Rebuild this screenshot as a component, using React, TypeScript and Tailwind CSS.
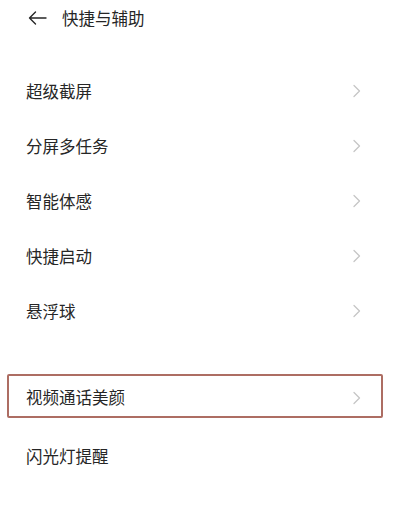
import React from 'react';

const groupOne = ['超级截屏', '分屏多任务', '智能体感', '快捷启动', '悬浮球'];

const Chevron = () => (
  <svg width="10" height="14" viewBox="0 0 10 14" fill="none" className="shrink-0">
    <path d="M2 1.5 L7.5 7 L2 12.5" stroke="#c6c6c6" strokeWidth="1.3" strokeLinecap="round" strokeLinejoin="round" />
  </svg>
);

const Row = ({ label, arrow = true }: { label: string; arrow?: boolean }) => (
  <div className="h-[55px] flex items-center justify-between pl-[26px] pr-[38px]">
    <span className="text-[16.5px] text-[#262626]">{label}</span>
    {arrow && <Chevron />}
  </div>
);

export default function App() {
  return (
    <div
      className="w-[400px] h-[506px] bg-white overflow-hidden"
      style={{ fontFamily: '"Noto Sans CJK SC", "Noto Sans", sans-serif' }}
    >
      {/* header */}
      <div className="h-[36px] flex items-center pl-[28px] gap-[15px]">
        <svg width="19" height="14" viewBox="0 0 19 14" fill="none">
          <path d="M18 7 H1.5 M7.5 1 L1.5 7 L7.5 13" stroke="#262626" strokeWidth="1.4" strokeLinecap="round" strokeLinejoin="round" />
        </svg>
        <span className="text-[16.5px] text-[#262626]">快捷与辅助</span>
      </div>

      <div className="mt-[27.5px]">
        {groupOne.map(l => (
          <Row key={l} label={l} />
        ))}
      </div>

      {/* highlighted row */}
      <div className="mt-[35.5px] ml-[7px] w-[376px] h-[44px] border-2 border-[#ad6d63] rounded-[2px] flex items-center justify-between pl-[17px] pr-[19px] pt-[3px]">
        <span className="text-[16.5px] text-[#262626]">视频通话美颜</span>
        <Chevron />
      </div>

      <div className="mt-[10.5px]">
        <Row label="闪光灯提醒" arrow={false} />
      </div>
    </div>
  );
}
